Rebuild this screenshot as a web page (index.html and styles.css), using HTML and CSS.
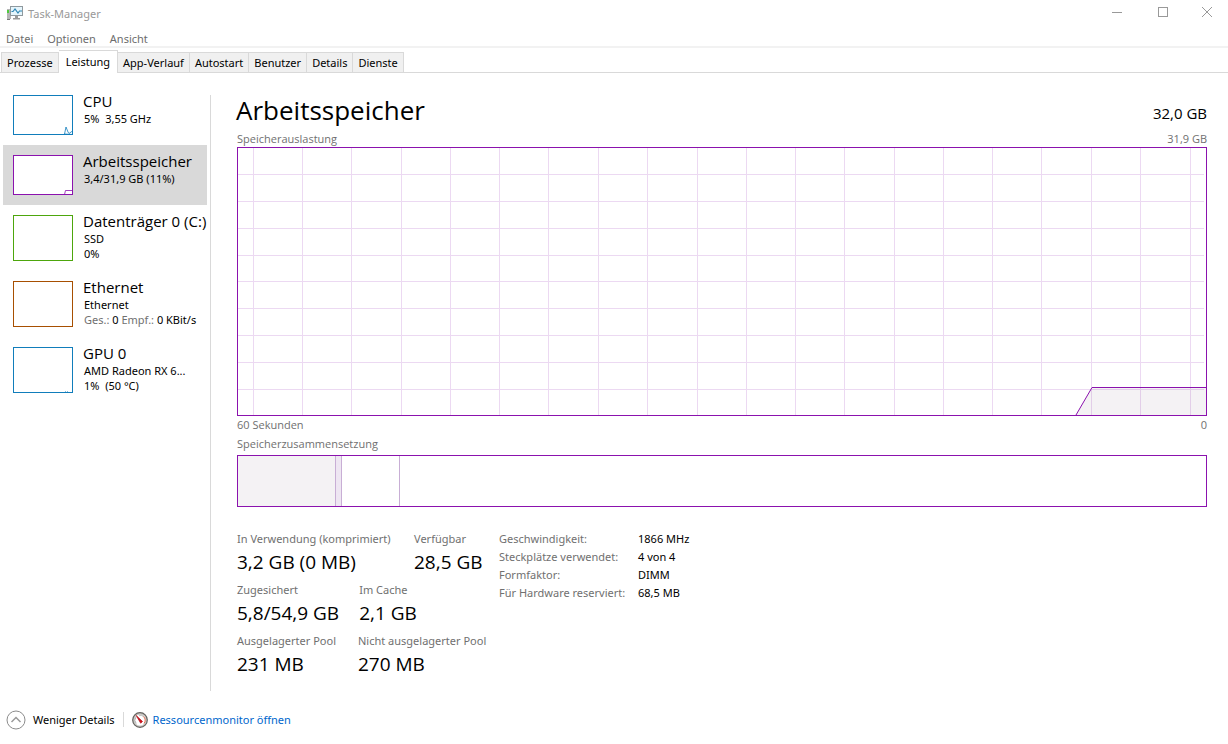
FILE: index.html
```html
<!DOCTYPE html>
<html lang="de">
<head>
<meta charset="utf-8">
<title>Task-Manager</title>
<link rel="stylesheet" href="styles.css">
</head>
<body>
<div class="window">
  <header class="titlebar">
    <svg class="app-icon" width="16" height="14" viewBox="0 0 16 14" aria-hidden="true">
      <rect x="0" y="3" width="4" height="10" fill="#b5b5b5"/>
      <rect x="0" y="4" width="2" height="3" fill="#4ecb3d"/>
      <path d="M0 13.500h3" stroke="#777"/>
      <rect x="3.500" y=".5" width="12" height="9" fill="#e5f5fc" stroke="#8f999e"/>
      <path d="M4.500 5.500h1.500l2-2.500 3 4 1.500-2H15" fill="none" stroke="#2d86b4" stroke-width="1.200"/>
      <path d="M8 10h3v2h2v1.500H6V12h2z" fill="#999"/>
    </svg>
    <span class="title">Task-Manager</span>
    <div class="controls">
      <button class="control" aria-label="Minimieren"><svg width="12" height="12" viewBox="0 0 12 12"><path d="M1 6.500h10"/></svg></button>
      <button class="control" aria-label="Maximieren"><svg width="12" height="12" viewBox="0 0 12 12"><path d="M1.500 1.500h9v9h-9z"/></svg></button>
      <button class="control" aria-label="Schließen"><svg width="12" height="12" viewBox="0 0 12 12"><path class="smooth" d="M1 1l10 10M11 1L1 11"/></svg></button>
    </div>
  </header>
  <nav class="menu">
    <button>Datei</button>
    <button>Optionen</button>
    <button>Ansicht</button>
  </nav>
  <div class="tabs" role="tablist">
    <button class="tab" role="tab">Prozesse</button>
    <button class="tab active" role="tab" aria-selected="true">Leistung</button>
    <button class="tab" role="tab">App-Verlauf</button>
    <button class="tab" role="tab">Autostart</button>
    <button class="tab" role="tab">Benutzer</button>
    <button class="tab" role="tab">Details</button>
    <button class="tab" role="tab">Dienste</button>
  </div>
  <div class="body">
    <aside class="sidebar">
      <button class="device">
        <svg class="thumb blue" width="60" height="40" viewBox="0 0 60 40"><rect x=".5" y=".5" width="59" height="39"/><path class="smooth" d="M51.500 39l1.500-7 2 5 1 1.500 3.500-2.500v3.500z"/></svg>
        <span class="device-text"><span class="name">CPU</span><span class="info">5%&nbsp; 3,55 GHz</span></span>
      </button>
      <button class="device selected">
        <svg class="thumb purple" width="60" height="40" viewBox="0 0 60 40"><rect x=".5" y=".5" width="59" height="39"/><path class="smooth" d="M51.500 39.500l1-4h7"/></svg>
        <span class="device-text"><span class="name">Arbeitsspeicher</span><span class="info">3,4/31,9 GB (11%)</span></span>
      </button>
      <button class="device">
        <svg class="thumb green" width="60" height="46" viewBox="0 0 60 46"><rect x=".5" y=".5" width="59" height="45"/></svg>
        <span class="device-text"><span class="name">Datenträger 0 (C:)</span><span class="info">SSD</span><span class="info">0%</span></span>
      </button>
      <button class="device">
        <svg class="thumb brown" width="60" height="46" viewBox="0 0 60 46"><rect x=".5" y=".5" width="59" height="45"/></svg>
        <span class="device-text"><span class="name">Ethernet</span><span class="info">Ethernet</span><span class="info"><span class="muted">Ges.:</span> 0 <span class="muted">Empf.:</span> 0 KBit/s</span></span>
      </button>
      <button class="device">
        <svg class="thumb blue" width="60" height="46" viewBox="0 0 60 46"><rect x=".5" y=".5" width="59" height="45"/><path d="M52 44.500h1M54 44.500h1" opacity=".5"/></svg>
        <span class="device-text"><span class="name">GPU 0</span><span class="info">AMD Radeon RX 6...</span><span class="info">1%&nbsp; (50 °C)</span></span>
      </button>
    </aside>
    <main class="detail">
      <div class="heading">
        <h1>Arbeitsspeicher</h1>
        <span class="capacity">32,0 GB</span>
      </div>
      <div class="caption"><span>Speicherauslastung</span><span>31,9 GB</span></div>
      <div class="chart">
        <svg viewBox="0 0 968 267" preserveAspectRatio="none" aria-label="Speicherauslastung">
          <path class="fill" d="M838 267l16-27.500h114V267z"/>
          <path class="grid" d="M15.500 0v267M64.500 0v267M113.500 0v267M163.500 0v267M212.500 0v267M261.500 0v267M310.500 0v267M360.500 0v267M409.500 0v267M459.500 0v267M508.500 0v267M557.500 0v267M606.500 0v267M656.500 0v267M705.500 0v267M754.500 0v267M803.500 0v267M853.500 0v267M902.500 0v267M952.500 0v267M0 26.500h966M0 53.500h966M0 80.500h966M0 107.500h966M0 133.500h966M0 160.500h966M0 187.500h966M0 214.500h966M0 241.500h966"/>
          <path class="line" d="M838 267l16-27.500h114"/>
        </svg>
      </div>
      <div class="caption"><span>60 Sekunden</span><span>0</span></div>
      <div class="caption second"><span>Speicherzusammensetzung</span></div>
      <div class="composition">
        <span class="used"></span><span class="modified"></span><span class="standby"></span><span class="free"></span>
      </div>
      <div class="stats">
        <div class="figures">
          <dl class="row">
            <div class="figure wide"><dt>In Verwendung (komprimiert)</dt><dd>3,2 GB (0 MB)</dd></div>
            <div class="figure"><dt>Verfügbar</dt><dd>28,5 GB</dd></div>
          </dl>
          <dl class="row">
            <div class="figure"><dt>Zugesichert</dt><dd>5,8/54,9 GB</dd></div>
            <div class="figure"><dt>Im Cache</dt><dd>2,1 GB</dd></div>
          </dl>
          <dl class="row">
            <div class="figure"><dt>Ausgelagerter Pool</dt><dd>231 MB</dd></div>
            <div class="figure"><dt>Nicht ausgelagerter Pool</dt><dd>270 MB</dd></div>
          </dl>
        </div>
        <table class="facts">
          <tr><th scope="row">Geschwindigkeit:</th><td>1866 MHz</td></tr>
          <tr><th scope="row">Steckplätze verwendet:</th><td>4 von 4</td></tr>
          <tr><th scope="row">Formfaktor:</th><td>DIMM</td></tr>
          <tr><th scope="row">Für Hardware reserviert:</th><td>68,5 MB</td></tr>
        </table>
      </div>
    </main>
  </div>
  <footer class="footer">
    <button class="fewer">
      <svg width="20" height="20" viewBox="0 0 20 20" aria-hidden="true"><circle cx="10" cy="10" r="9" fill="none" stroke="#8c8c8c"/><path d="M5.500 12L10 7.500l4.500 4.500" fill="none" stroke="#9a9a9a" stroke-width="1.500"/></svg>
      <span>Weniger Details</span>
    </button>
    <a class="monitor" href="#">
      <svg width="16" height="16" viewBox="0 0 16 16" aria-hidden="true"><circle cx="8" cy="8" r="7.300" fill="#c9c7c2" stroke="#64625f" stroke-width="1.200"/><circle cx="8" cy="8" r="5.500" fill="#fff"/><path d="M4.200 11.500A5 5 0 0 1 4 5M7 3.200a5 5 0 0 1 4.500 1.300" fill="none" stroke="#999" stroke-width=".8"/><path d="M11.500 4.500a5 5 0 0 1 .5 7" fill="none" stroke="#e36b50"/><path d="M4.200 3.500l6.300 6-1.800 1.700z" fill="#d3121b" stroke="#b20d17" stroke-width=".7"/></svg>
      <span>Ressourcenmonitor öffnen</span>
    </a>
  </footer>
</div>
</body>
</html>
```
FILE: styles.css
```css
* { box-sizing: border-box; }
body {
  margin: 0;
  background: #fff;
  color: #000;
  font: 11px/15px "Noto Sans", "Open Sans", sans-serif;
}
button {
  margin: 0;
  padding: 0;
  border: 0;
  background: none;
  color: inherit;
  font: inherit;
  text-align: left;
  white-space: nowrap;
}
.window { display: flex; flex-direction: column; min-height: 100vh; }

.titlebar { display: flex; align-items: center; height: 26px; padding-left: 7px; color: #999; }
.title { margin-left: 5px; }
.controls { display: flex; align-self: stretch; margin-left: auto; }
.control { display: grid; place-items: center; width: 46px; height: 24px; }
.controls .control:last-child { width: 42px; }
.control path { fill: none; stroke: #999; shape-rendering: crispEdges; }
.control .smooth { shape-rendering: auto; }

.menu { display: flex; gap: 14px; height: 20px; padding: 4px 6px 0; color: #6d6d6d; }
.tabs {
  display: flex;
  align-items: flex-end;
  height: 27px;
  padding-left: 1px;
  border-top: 2px solid #f2f2f2;
  border-bottom: 1px solid #d9d9d9;
}
.tab {
  height: 20px;
  padding: 0 5px;
  border: 1px solid #d9d9d9;
  border-width: 1px 1px 0 0;
  background: #f0f0f0;
}
.tab:first-child { border-left-width: 1px; }
.tab.active { height: 23px; margin-bottom: -1px; padding: 0 7px 2px; background: #fff; }

.body { display: flex; flex: 1; padding-top: 12px; }
.sidebar { flex: none; width: 211px; padding: 0 3px; position: relative; }
.sidebar::after { content: ""; position: absolute; top: 10px; right: 0; bottom: 0; width: 1px; background: #d9d9d9; }
.device { display: flex; gap: 10px; width: 204px; padding: 10px 0 10px 10px; }
.device.selected { background: #d9d9d9; }
.thumb { flex: none; display: block; fill: #fff; }
.thumb rect, .thumb path { stroke: currentColor; shape-rendering: crispEdges; }
.thumb .smooth { shape-rendering: auto; fill: none; opacity: .8; }
.blue { color: #117dbb; }
.purple { color: #8b12ae; }
.green { color: #4da60c; }
.brown { color: #a74f01; }
.device-text { display: flex; flex-direction: column; height: 40px; margin-top: -3px; }
.name { font: 15px/19px "Open Sans", "Noto Sans", sans-serif; }
.info { padding-left: 1px; }
.muted { color: #707070; }

.detail { flex: 1; min-width: 0; padding: 8px 21px 12px 26px; }
.heading { display: flex; justify-content: space-between; align-items: flex-end; height: 38px; font-family: "Open Sans", "Noto Sans", sans-serif; }
h1 { margin: 0 0 0 -1px; font-size: 26px; font-weight: 400; line-height: 42px; }
.capacity { font-size: 15px; line-height: 18px; padding-bottom: 9px; }
.caption { display: flex; justify-content: space-between; height: 16px; padding-bottom: 1px; color: #707070; font-family: "Open Sans", "Noto Sans", sans-serif; }
.chart { border: 1px solid #8b12ae; margin-bottom: 1px; }
.chart svg { display: block; width: 100%; height: 267px; }
.chart path { vector-effect: non-scaling-stroke; fill: none; }
.chart .fill { fill: #f4f2f4; }
.chart .grid { stroke: #8b12ae; stroke-opacity: .16; shape-rendering: crispEdges; }
.chart .line { stroke: #8b12ae; }
.second { height: 22px; padding-top: 3px; }
.composition { display: flex; height: 52px; border: 1px solid #8b12ae; }
.composition span { border-right: 1px solid #c8aed5; }
.used { flex: 97; background: #f4f2f4; }
.modified { flex: 5; background: #eee6f2; }
.standby { flex: 57; }
.composition .free { flex: 806; border: 0; }

.stats { display: flex; gap: 12px; padding-top: 24px; }
.figures { display: flex; flex-direction: column; gap: 8px; width: 250px; }
.row { display: flex; gap: 20px; margin: 0; white-space: nowrap; }
.figure:first-child { min-width: 101px; }
.figure.wide:first-child { min-width: 157px; }
dt, .facts th { color: #707070; font-weight: 400; text-align: left; }
dt { height: 19px; }
dd { margin: 0; font: 19px/24px "Open Sans", "Noto Sans", sans-serif; }
.facts { align-self: flex-start; border-collapse: collapse; white-space: nowrap; }
.facts th, .facts td { height: 18px; padding: 0 0 3px; }
.facts th { width: 139px; }

.footer { display: flex; align-items: center; height: 53px; padding: 4px 6px 0; flex: none; }
.fewer { display: flex; align-items: center; gap: 7px; padding-right: 8px; border-right: 1px solid #d9d9d9; height: 15px; }
.monitor { display: flex; align-items: center; gap: 5px; padding-left: 8px; color: #0066cc; text-decoration: none; }
```
